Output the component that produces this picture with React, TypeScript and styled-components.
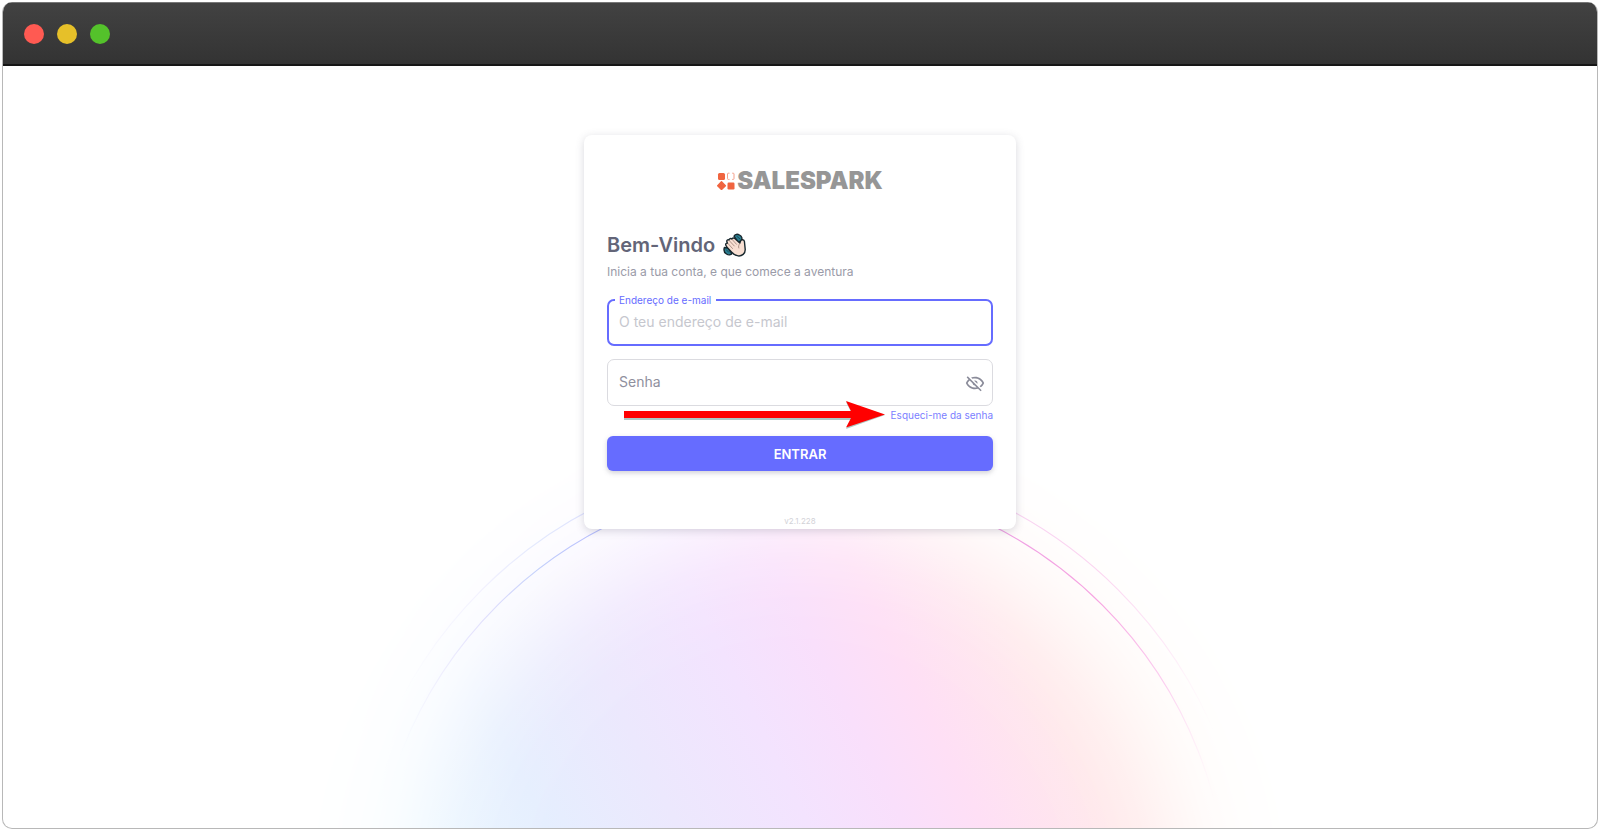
import React, { useState } from "react";
import styled, { createGlobalStyle, css } from "styled-components";

const GlobalStyle = createGlobalStyle`
  *, *::before, *::after { box-sizing: border-box; }
  body {
    margin: 0;
    background: #fff;
    font-family: Inter, "Liberation Sans", sans-serif;
  }
`;

const Page = styled.div`
  display: flex;
  min-height: 100vh;
  padding: 2px;
`;

const BrowserWindow = styled.div`
  flex: 1;
  display: flex;
  flex-direction: column;
  border-radius: 10px;
  overflow: hidden;
  border: 1px solid #b8b8b8;
  border-top: 0;
`;

const TitleBar = styled.header`
  display: flex;
  align-items: center;
  gap: 13px;
  height: 64px;
  padding: 0 22px;
  margin: 0 -1px;
  background: linear-gradient(#424242, #333);
  border-top: 1px solid #777;
  border-bottom: 2px solid #161616;
`;

const Dot = styled.span<{ $color: string }>`
  width: 20px;
  height: 20px;
  border-radius: 50%;
  background: ${(p) => p.$color};
`;

const Content = styled.main`
  position: relative;
  flex: 1;
  display: flex;
  justify-content: center;
  align-items: flex-start;
  padding: 69px 16px 48px;
  overflow: hidden;
`;

const Backdrop = styled.svg`
  position: absolute;
  left: 50%;
  bottom: 0;
  width: 1040px;
  height: 440px;
  transform: translateX(-50%);
`;

const Card = styled.section`
  position: relative;
  width: 100%;
  max-width: 432px;
  padding: 34px 23px 2px;
  border-radius: 8px;
  background: #fff;
  box-shadow: 0 2px 8px rgba(76, 78, 100, 0.22);
`;

const Logo = styled.div`
  display: flex;
  justify-content: center;
  align-items: center;
  gap: 2px;
  height: 24px;
  margin-bottom: 36px;
`;

const LogoText = styled.span`
  font-size: 24px;
  line-height: 24px;
  font-weight: 900;
  color: #969696;
`;

const Title = styled.h1`
  display: flex;
  align-items: center;
  gap: 8px;
  margin: 0;
  font-size: 20px;
  line-height: 32px;
  font-weight: 600;
  color: #636578;
`;

const Subtitle = styled.p`
  margin: 1px 0 17px;
  font-size: 12px;
  line-height: 20px;
  color: #9a9ba8;
`;

const Form = styled.form`
  display: flex;
  flex-direction: column;
`;

const Field = styled.div`
  position: relative;
  display: flex;
  height: 47px;
  & + & { margin-top: 13px; }
`;

const Input = styled.input<{ $active?: boolean }>`
  flex: 1;
  min-width: 0;
  padding: 0 40px 1px ${(p) => (p.$active ? 10 : 11)}px;
  border: ${(p) => (p.$active ? "2px solid #666cff" : "1px solid #dbdbe0")};
  border-radius: 7px;
  outline: 0;
  background: #fff;
  font: 400 14px/20px Inter, "Liberation Sans", sans-serif;
  color: #636578;
  &::placeholder { color: #c6c7ce; opacity: 1; }
`;

const Label = styled.label<{ $floating?: boolean }>`
  position: absolute;
  ${(p) =>
    p.$floating
      ? css`
          top: -6px;
          left: 8px;
          padding: 0 5px 0 4px;
          font-size: 10px;
          line-height: 14px;
          background: #fff;
          color: #666cff;
        `
      : css`
          top: 13px;
          left: 12px;
          font-size: 14px;
          line-height: 20px;
          color: #8f909e;
          pointer-events: none;
        `}
`;

const EyeButton = styled.button`
  position: absolute;
  top: 9px;
  right: 3px;
  display: flex;
  justify-content: center;
  align-items: center;
  width: 30px;
  height: 30px;
  padding: 0;
  border: 0;
  border-radius: 50%;
  background: none;
  color: #8a8b99;
  cursor: pointer;
`;

const ForgotRow = styled.div`
  position: relative;
  display: flex;
  justify-content: flex-end;
  margin-bottom: 12px;
`;

const ForgotLink = styled.a`
  font-size: 10px;
  line-height: 18px;
  color: #7b80ff;
  text-decoration: none;
`;

const Arrow = styled.svg`
  position: absolute;
  top: -6px;
  right: 107px;
  width: 263px;
  height: 30px;
  pointer-events: none;
`;

const SubmitButton = styled.button`
  height: 35px;
  border: 0;
  border-radius: 6px;
  background: #666cff;
  color: #fff;
  font: 600 13px/20px Inter, "Liberation Sans", sans-serif;
  text-transform: uppercase;
  box-shadow: 0 2px 5px rgba(76, 78, 100, 0.26);
  cursor: pointer;
`;

const Version = styled.p`
  margin: 44px 0 0;
  text-align: center;
  font-size: 8px;
  line-height: 12px;
  color: #d2d2d7;
`;

function Halo() {
  return (
    <Backdrop viewBox="0 0 1040 440" fill="none" aria-hidden="true">
      <defs>
        <linearGradient id="hues" gradientUnits="userSpaceOnUse" x1="150" y1="520" x2="850" y2="170">
          <stop offset="0" stopColor="#e9f7ff" />
          <stop offset="0.18" stopColor="#e5eefe" />
          <stop offset="0.33" stopColor="#ece8fd" />
          <stop offset="0.48" stopColor="#f3e3fe" />
          <stop offset="0.59" stopColor="#f9dffb" />
          <stop offset="0.68" stopColor="#fedff5" />
          <stop offset="0.83" stopColor="#ffe8ea" />
          <stop offset="1" stopColor="#fff3ec" />
        </linearGradient>
        <radialGradient id="falloff" gradientUnits="userSpaceOnUse" cx="520" cy="520" r="500">
          <stop offset="0.52" stopColor="#fff" />
          <stop offset="0.62" stopColor="#fff" stopOpacity="0.93" />
          <stop offset="0.7" stopColor="#fff" stopOpacity="0.75" />
          <stop offset="0.77" stopColor="#fff" stopOpacity="0.48" />
          <stop offset="0.83" stopColor="#fff" stopOpacity="0.25" />
          <stop offset="0.9" stopColor="#fff" stopOpacity="0.1" />
          <stop offset="1" stopColor="#fff" stopOpacity="0" />
        </radialGradient>
        <mask id="disc" maskUnits="userSpaceOnUse" x="0" y="0" width="1040" height="440">
          <rect width="1040" height="440" fill="url(#falloff)" />
        </mask>
        <linearGradient id="ring" gradientUnits="userSpaceOnUse" x1="120" y1="0" x2="935" y2="0">
          <stop offset="0" stopColor="#dcd6fa" stopOpacity="0" />
          <stop offset="0.09" stopColor="#d8d4fc" stopOpacity="0.6" />
          <stop offset="0.17" stopColor="#c4d0fb" />
          <stop offset="0.28" stopColor="#b0b4ff" />
          <stop offset="0.73" stopColor="#ee9fe4" />
          <stop offset="0.86" stopColor="#f7a5e2" />
          <stop offset="0.94" stopColor="#fbc4ee" stopOpacity="0.8" />
          <stop offset="1" stopColor="#fde0f6" stopOpacity="0" />
        </linearGradient>
      </defs>
      <rect width="1040" height="440" fill="url(#hues)" mask="url(#disc)" />
      <circle cx="520" cy="520" r="428" stroke="url(#ring)" strokeWidth="1.2" />
      <circle cx="520" cy="520" r="450" stroke="url(#ring)" strokeWidth="1.2" opacity="0.45" />
    </Backdrop>
  );
}

function LogoMark() {
  return (
    <svg width="18" height="18" viewBox="0 0 18 18" aria-hidden="true">
      <rect x="1" y="1" width="7" height="7" rx="1.5" fill="#f0643f" />
      <path d="M12.500 1.200h-1.200q-.8 0-.8.8v4.600q0 .8.8.8h1.200M15.200 1.200h1q.8 0 .8.8v4.600q0 .8-.8.8h-1" fill="none" stroke="#f5a08a" strokeWidth="1" />
      <path d="M4.500 9.800 8.400 13.700 4.500 17.500 .7 13.700Z" fill="#f0643f" stroke="#f0643f" strokeWidth="1.4" strokeLinejoin="round" />
      <rect x="10.500" y="10.500" width="7" height="7" rx="1.200" fill="#f0643f" />
    </svg>
  );
}

function WavingHand() {
  return (
    <svg width="23" height="24" viewBox="0 0 23 24" aria-hidden="true">
      <g stroke="#17272d" strokeWidth="1.4" strokeLinejoin="round" strokeLinecap="round">
        <path d="M11 3.2C12 1 14.5.8 16.500 2c2.400 1.300 3 3.500 1.800 6L15 9Z" fill="#2b7f92" />
        <path d="M1.400 14.500C.6 17 1 19.500 3.500 21c2 1.200 4.500 1 5.500-.5L5 15Z" fill="#2b7f92" />
        <path
          d="M4.200 14.600 3 12.500c-.9-1.600.4-2.600 1.400-2.300L3.900 8.700c-.5-1.600 1-2.500 2.100-1.700.2-1.500 1.800-2 2.800-1 .6-1.200 2-1.400 3-.5l5 4.600 1-2.500c.5-1.400 3.300-1.200 3.600.7l.8 8c.3 4.500-3.400 6.900-7 6.600-2.700-.2-4.600-1.500-6.200-3.500Z"
          fill="#f8dfd2"
        />
      </g>
      <path d="m5 10.500 4.500 5M6.300 7.700l5 5.300M9 6.300l4.500 5M17 10.500c-1.500 1.500-1.700 3-1.200 4.500" fill="none" stroke="#8d7167" strokeWidth=".7" strokeLinecap="round" />
      <path d="m13.500 3 3.500 3M3 16.500l3 3" stroke="#163d48" strokeWidth=".8" />
    </svg>
  );
}

function EyeOffIcon() {
  return (
    <svg width="20" height="20" viewBox="0 0 24 24" fill="currentColor" aria-hidden="true">
      <path d="M2,5.27L3.28,4L20,20.72L18.73,22L15.65,18.92C14.5,19.3 13.28,19.5 12,19.5C7,19.5 2.73,16.39 1,12C1.69,10.24 2.79,8.69 4.19,7.46L2,5.27M12,9A3,3 0 0,1 15,12C15,12.35 14.94,12.69 14.83,13L11,9.17C11.31,9.06 11.65,9 12,9M12,4.5C17,4.5 21.27,7.61 23,12C22.18,14.08 20.79,15.88 19,17.19L17.58,15.76C18.94,14.82 20.06,13.54 20.82,12C19.17,8.64 15.76,6.5 12,6.5C10.91,6.5 9.84,6.68 8.84,7L7.3,5.47C8.74,4.85 10.33,4.5 12,4.5M3.18,12C4.83,15.36 8.24,17.5 12,17.5C12.69,17.5 13.37,17.43 14,17.29L11.72,15C10.29,14.85 9.15,13.71 9,12.28L5.6,8.87C4.61,9.72 3.78,10.78 3.18,12Z" />
    </svg>
  );
}

export default function App() {
  const [email, setEmail] = useState("");
  const [password, setPassword] = useState("");
  const [visible, setVisible] = useState(false);

  return (
    <>
      <GlobalStyle />
      <Page>
        <BrowserWindow>
          <TitleBar>
            <Dot $color="#ff5a52" />
            <Dot $color="#e6c029" />
            <Dot $color="#54c22b" />
          </TitleBar>
          <Content>
            <Halo />
            <Card>
              <Logo>
                <LogoMark />
                <LogoText>SALESPARK</LogoText>
              </Logo>
              <Title>
                Bem-Vindo
                <WavingHand />
              </Title>
              <Subtitle>Inicia a tua conta, e que comece a aventura</Subtitle>
              <Form onSubmit={(e) => e.preventDefault()}>
                <Field>
                  <Input
                    id="email"
                    type="email"
                    $active
                    placeholder="O teu endereço de e-mail"
                    value={email}
                    onChange={(e) => setEmail(e.target.value)}
                  />
                  <Label htmlFor="email" $floating>Endereço de e-mail</Label>
                </Field>
                <Field>
                  <Input
                    id="password"
                    type={visible ? "text" : "password"}
                    value={password}
                    onChange={(e) => setPassword(e.target.value)}
                  />
                  <Label htmlFor="password" $floating={password !== ""}>Senha</Label>
                  <EyeButton type="button" aria-label="Mostrar senha" onClick={() => setVisible(!visible)}>
                    <EyeOffIcon />
                  </EyeButton>
                </Field>
                <ForgotRow>
                  <Arrow viewBox="0 0 263 30" aria-hidden="true">
                    <path d="M1 12h227l-5-10 39 13-39 14 5-9H1Z" fill="#5c8f8a" opacity=".5" />
                    <path d="M1 11h227l-5-10 39 13.500-39 13 5-9.500H1Z" fill="#f00" />
                  </Arrow>
                  <ForgotLink href="#recuperar">Esqueci-me da senha</ForgotLink>
                </ForgotRow>
                <SubmitButton type="submit">Entrar</SubmitButton>
              </Form>
              <Version>v2.1.228</Version>
            </Card>
          </Content>
        </BrowserWindow>
      </Page>
    </>
  );
}
